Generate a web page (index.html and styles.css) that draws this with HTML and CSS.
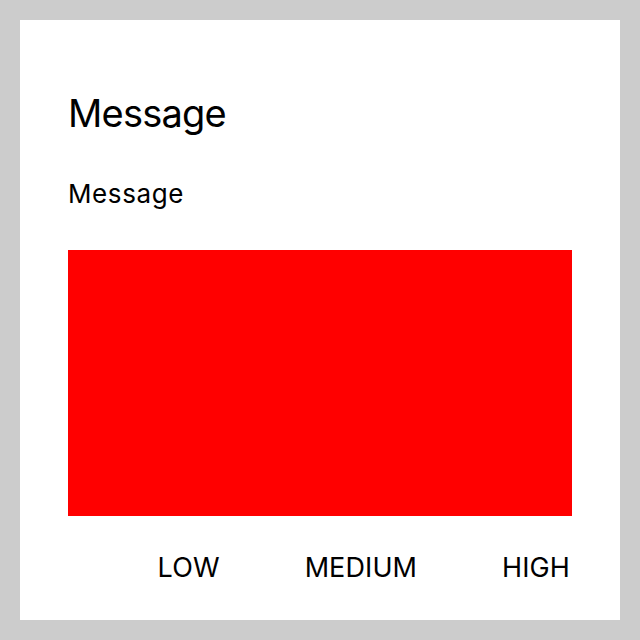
FILE: index.html
```html
<!DOCTYPE html>
<html lang="en">
<head>
  <meta charset="UTF-8">
  <title>Message</title>
  <link rel="stylesheet" href="styles.css">
</head>
<body>
  <div class="dialog">
    <h1 class="title">Message</h1>
    <p class="message">Message</p>
    <div class="swatch"></div>
    <div class="actions">
      <button class="action">LOW</button>
      <button class="action">MEDIUM</button>
      <button class="action">HIGH</button>
    </div>
  </div>
</body>
</html>
```

FILE: styles.css
```css
body {
  margin: 0;
  background-color: #cccccc;
  font-family: Inter, "Noto Sans", sans-serif;
  color: #000000;
}

.dialog {
  margin: 20px;
  width: 600px;
  height: 600px;
  box-sizing: border-box;
  background-color: #ffffff;
  padding: 0 48px;
  display: flex;
  flex-direction: column;
}

.title {
  margin: 71px 0 0;
  font-size: 38px;
  font-weight: 400;
  line-height: 44px;
  letter-spacing: -0.8px;
}

.message {
  margin: 44px 0 0;
  font-size: 26px;
  line-height: 30px;
  letter-spacing: 0.6px;
}

.swatch {
  margin-top: 41px;
  height: 266px;
  background-color: #ff0000;
}

.actions {
  display: flex;
  justify-content: flex-end;
  gap: 85px;
  margin-top: 36px;
  padding-right: 2px;
}

.action {
  background: none;
  border: none;
  padding: 0;
  font-family: inherit;
  font-size: 27px;
  line-height: 32px;
  letter-spacing: 0.1px;
  color: #000000;
}
```
